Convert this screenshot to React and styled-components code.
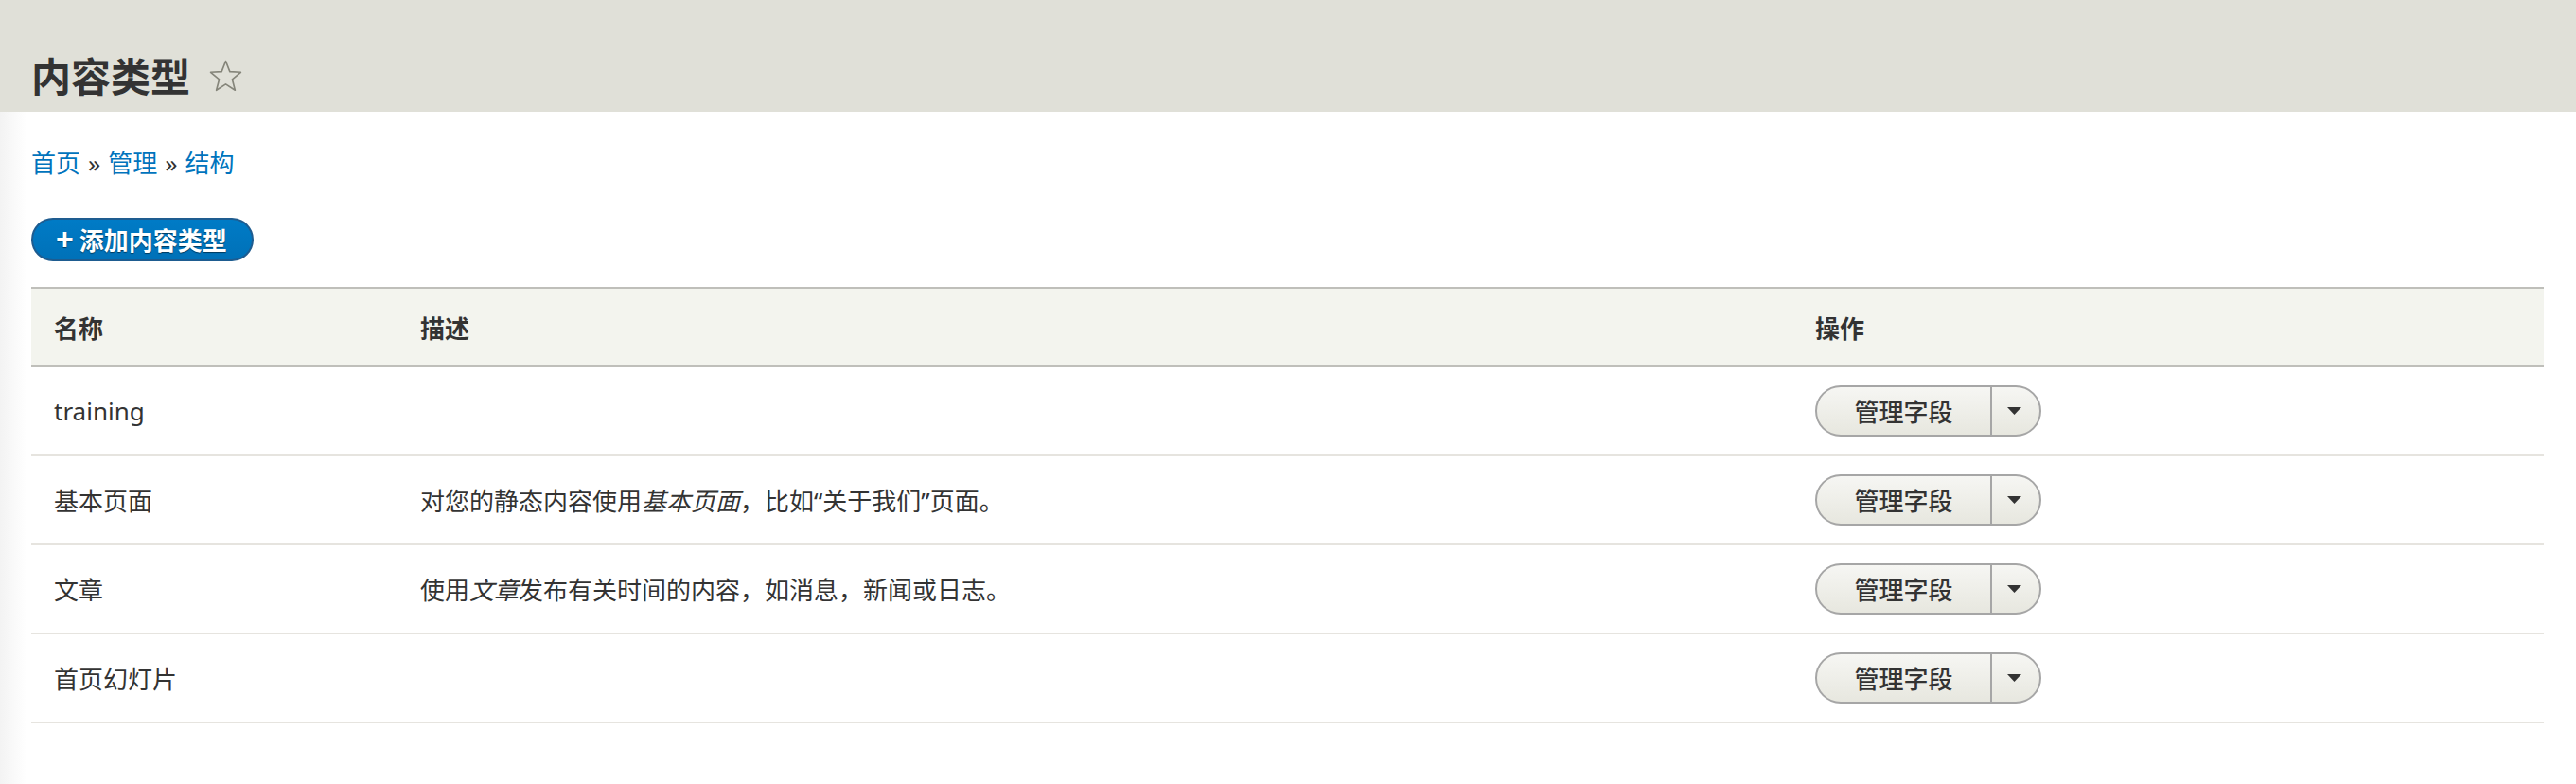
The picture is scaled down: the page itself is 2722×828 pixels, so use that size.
import React from "react";
import styled, { createGlobalStyle } from "styled-components";

const GlobalStyle = createGlobalStyle`
  html, body {
    margin: 0;
    padding: 0;
    background: #fff;
  }
  body {
    font-family: "Noto Sans", "Noto Sans CJK SC", sans-serif;
    color: #333;
  }
`;

const rows = [
  { id: 1, name: "training", desc: null },
  {
    id: 2,
    name: "基本页面",
    desc: (
      <>
        对您的静态内容使用<em>基本页面</em>，比如“关于我们”页面。
      </>
    ),
  },
  {
    id: 3,
    name: "文章",
    desc: (
      <>
        使用<em>文章</em>发布有关时间的内容，如消息，新闻或日志。
      </>
    ),
  },
  { id: 4, name: "首页幻灯片", desc: null },
];

export default function App() {
  return (
    <Page>
      <GlobalStyle />
      <Header>
        <Title>内容类型</Title>
        <Star viewBox="0 0 36 36" aria-hidden="true">
          <path
            d="M18 2.5 L22.2 13.3 L33.5 13.9 L24.7 21.2 L27.6 32.4 L18 26.2 L8.4 32.4 L11.3 21.2 L2.5 13.9 L13.8 13.3 Z"
            fill="none"
            stroke="#85857a"
            strokeWidth="1.6"
            strokeLinejoin="round"
          />
        </Star>
      </Header>

      <Content>
        <Breadcrumb>
          <a href="#">首页</a>
          <Sep>»</Sep>
          <a href="#">管理</a>
          <Sep>»</Sep>
          <a href="#">结构</a>
        </Breadcrumb>

        <PrimaryButton href="#">
          <Plus>+</Plus>添加内容类型
        </PrimaryButton>

        <Table>
          <colgroup>
            <col style={{ width: 387 }} />
            <col style={{ width: 1474 }} />
            <col />
          </colgroup>
          <thead>
            <tr>
              <Th>名称</Th>
              <Th>描述</Th>
              <Th>操作</Th>
            </tr>
          </thead>
          <tbody>
            {rows.map((row) => (
              <Tr key={row.id}>
                <Td>{row.name}</Td>
                <Td>{row.desc}</Td>
                <Td>
                  <DropButton>
                    <DropMain>管理字段</DropMain>
                    <DropToggle>
                      <svg width="15" height="8" viewBox="0 0 15 8">
                        <path d="M0 0 H15 L7.5 8 Z" fill="#333" />
                      </svg>
                    </DropToggle>
                  </DropButton>
                </Td>
              </Tr>
            ))}
          </tbody>
        </Table>
      </Content>
    </Page>
  );
}

const Page = styled.div`
  min-height: 828px;
  display: flex;
  flex-direction: column;
`;

const Header = styled.header`
  display: flex;
  align-items: center;
  gap: 19px;
  height: 118px;
  box-sizing: border-box;
  padding: 52px 33px 12px;
  background: #e0e0d8;
`;

const Title = styled.h1`
  margin: 0;
  font-family: "Noto Sans CJK SC", sans-serif;
  font-size: 42px;
  line-height: 54px;
  font-weight: 700;
  color: #333;
`;

const Star = styled.svg`
  width: 37px;
  height: 37px;
  margin-top: 2px;
`;

const Content = styled.main`
  flex: 1;
  padding: 0 34px 40px 33px;
  background: linear-gradient(to right, #f3f3f3 0, #ffffff 28px);
`;

const Breadcrumb = styled.nav`
  margin-top: 36px;
  font-size: 26px;
  line-height: 36px;

  a {
    color: #0074bd;
    text-decoration: none;
  }
`;

const Sep = styled.span`
  margin: 0 8px;
  color: #333;
`;

const PrimaryButton = styled.a`
  display: inline-flex;
  align-items: center;
  box-sizing: border-box;
  height: 46px;
  margin-top: 40px;
  padding: 0 26px 0 24px;
  border: 2px solid #1e5c90;
  border-radius: 23px;
  background: linear-gradient(to bottom, #007bc6, #0071b8);
  color: #fff;
  font-size: 26px;
  font-weight: 700;
  text-decoration: none;
  text-shadow: 0 1px 1px rgba(0, 0, 0, 0.5);
`;

const Plus = styled.span`
  font-family: "Liberation Sans", sans-serif;
  font-size: 32px;
  line-height: 1;
  margin-right: 6px;
  margin-top: -2px;
`;

const Table = styled.table`
  width: 100%;
  margin-top: 27px;
  border-collapse: collapse;
  table-layout: fixed;
  font-size: 26px;
`;

const Th = styled.th`
  height: 81px;
  padding: 0 24px;
  text-align: left;
  font-weight: 700;
  font-size: 26px;
  color: #333;
  background: #f3f4ee;
  border-top: 2px solid #bfbfba;
  border-bottom: 2px solid #bfbfba;
`;

const Tr = styled.tr`
  border-bottom: 2px solid #e6e4df;
`;

const Td = styled.td`
  height: 92px;
  padding: 0 24px;
  color: #333;
  vertical-align: middle;

  em {
    font-style: italic;
  }
`;

const DropButton = styled.div`
  display: inline-flex;
  align-items: stretch;
  height: 54px;
  box-sizing: border-box;
  border: 2px solid #a6a6a6;
  border-radius: 27px;
  overflow: hidden;
  background: linear-gradient(to bottom, #f6f6f3, #e7e7df);
`;

const DropMain = styled.span`
  display: flex;
  align-items: center;
  justify-content: center;
  width: 183px;
  font-size: 26px;
  font-weight: 500;
  color: #333;
  border-right: 2px solid #a6a6a6;
`;

const DropToggle = styled.span`
  display: flex;
  align-items: center;
  justify-content: center;
  width: 50px;
  padding-right: 4px;
  box-sizing: border-box;
`;
